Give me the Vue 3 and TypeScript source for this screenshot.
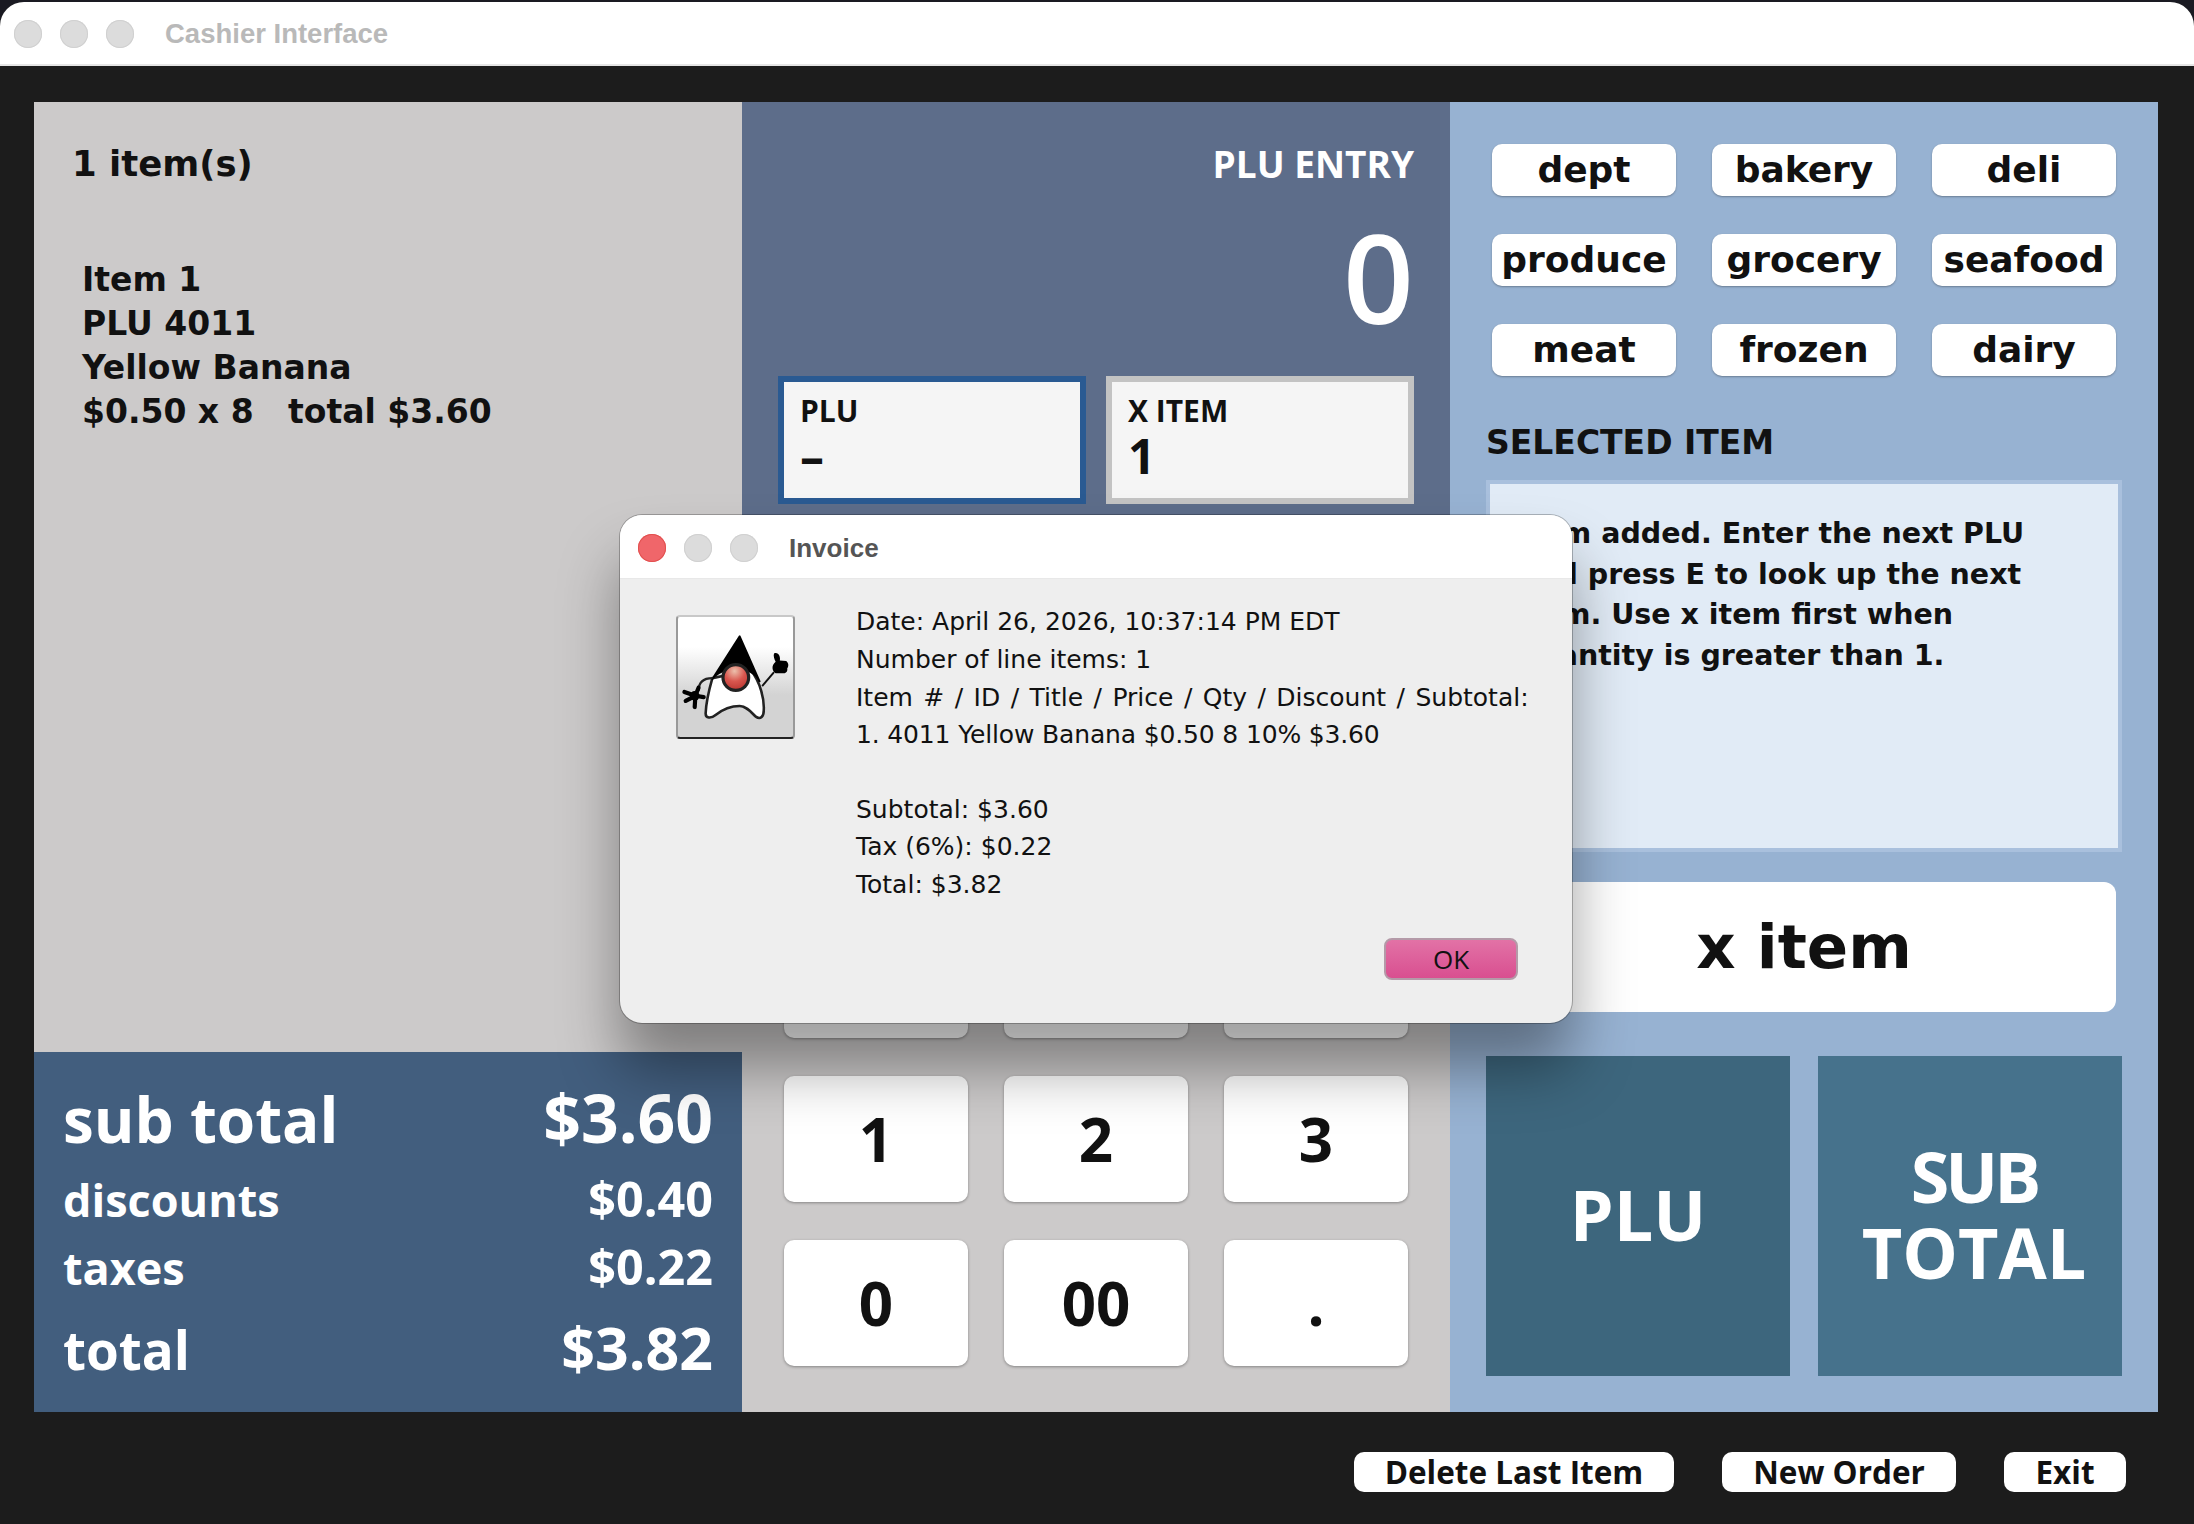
<template>
  <div class="screen">
    <div class="window">
      <header class="titlebar">
        <span class="dot"></span>
        <span class="dot"></span>
        <span class="dot"></span>
        <span class="window-title">Cashier Interface</span>
      </header>

      <main class="register">
        <section class="col col-left">
          <div class="receipt">
            <h2 class="count">1 item(s)</h2>
            <div class="lines">
              <div v-for="line in receiptLines" :key="line">{{ line }}</div>
            </div>
          </div>
          <div class="summary">
            <div v-for="row in summary" :key="row.label" class="sum-row" :class="row.size">
              <span class="sum-label">{{ row.label }}</span>
              <span class="sum-value">{{ row.value }}</span>
            </div>
          </div>
        </section>

        <section class="col col-mid">
          <div class="entry">
            <div class="entry-label">PLU ENTRY</div>
            <div class="entry-value">0</div>
            <div class="entry-boxes">
              <div class="entry-box active">
                <div class="box-label">PLU</div>
                <div class="box-value">–</div>
              </div>
              <div class="entry-box">
                <div class="box-label">X ITEM</div>
                <div class="box-value">1</div>
              </div>
            </div>
          </div>
          <div class="keypad">
            <button v-for="k in keys" :key="k" class="key">{{ k }}</button>
          </div>
        </section>

        <section class="col col-right">
          <div class="depts">
            <button v-for="d in departments" :key="d" class="dept">{{ d }}</button>
          </div>
          <h3 class="selected-title">SELECTED ITEM</h3>
          <div class="selected-box">
            Item added. Enter the next PLU<br />
            and press E to look up the next<br />
            item. Use x item first when<br />
            quantity is greater than 1.
          </div>
          <button class="x-item">x item</button>
          <div class="actions">
            <button class="action plu">PLU</button>
            <button class="action subtotal"><span class="sub-word">SUB</span><br />TOTAL</button>
          </div>
        </section>
      </main>

      <footer class="footer">
        <button class="foot-btn del">Delete Last Item</button>
        <button class="foot-btn order">New Order</button>
        <button class="foot-btn exit">Exit</button>
      </footer>
    </div>

    <div class="dialog">
      <div class="dialog-bar">
        <span class="dot red"></span>
        <span class="dot"></span>
        <span class="dot"></span>
        <span class="dialog-title">Invoice</span>
      </div>
      <div class="dialog-body">
        <div class="duke">
          <svg viewBox="198 345 358 373" width="100%" height="100%">
            <defs>
              <radialGradient id="noseFill" cx="0.45" cy="0.25" r="0.8">
                <stop offset="0" stop-color="#ecc0ac" />
                <stop offset="0.5" stop-color="#d9574f" />
                <stop offset="1" stop-color="#b8332e" />
              </radialGradient>
            </defs>
            <path d="M305 535C295 570 285 620 284 645C284 660 300 662 315 650C340 630 365 622 390 622C410 622 425 640 440 655C455 665 465 655 465 635C467 600 455 550 425 510Z" fill="#fff" stroke="#222" stroke-width="8" />
            <path d="M390 405L305 538C330 498 425 490 452 545Z" fill="#000" stroke="#000" stroke-width="6" stroke-linejoin="round" />
            <circle cx="378" cy="533" r="40" fill="url(#noseFill)" stroke="#222" stroke-width="10" />
            <path d="M460 560L497 516" stroke="#111" stroke-width="6" fill="none" />
            <path d="M497 458C510 452 518 468 515 480L535 482C544 490 542 500 538 505C540 512 536 518 530 520L502 520C490 512 488 495 502 484C498 475 494 465 497 458Z" fill="#000" />
            <path d="M305 535C280 535 262 545 262 575" stroke="#222" stroke-width="7" fill="none" />
            <circle cx="250" cy="590" r="15" fill="#000" />
            <path d="M252 590L218 578M252 590L222 606M252 592L250 625M252 590L278 594M252 590L262 565" stroke="#000" stroke-width="13" stroke-linecap="round" fill="none" />
          </svg>
        </div>
        <div class="invoice-text">
          <div>Date: April 26, 2026, 10:37:14 PM EDT</div>
          <div>Number of line items: 1</div>
          <div class="slashes">Item # / ID / Title / Price / Qty / Discount / Subtotal:</div>
          <div class="tight">1. 4011 Yellow Banana $0.50 8 10% $3.60</div>
          <div class="blank"></div>
          <div>Subtotal: $3.60</div>
          <div>Tax (6%): $0.22</div>
          <div>Total: $3.82</div>
        </div>
      </div>
      <div class="dialog-foot">
        <button class="ok">OK</button>
      </div>
    </div>
  </div>
</template>

<script setup lang="ts">
const receiptLines: string[] = ['Item 1', 'PLU 4011', 'Yellow Banana', '$0.50 x 8   total $3.60'];

const summary = [
  { label: 'sub total', value: '$3.60', size: 'big' },
  { label: 'discounts', value: '$0.40', size: 'small' },
  { label: 'taxes', value: '$0.22', size: 'small' },
  { label: 'total', value: '$3.82', size: 'large' },
];

const keys: string[] = ['7', '8', '9', '4', '5', '6', '1', '2', '3', '0', '00', '.'];

const departments: string[] = ['dept', 'bakery', 'deli', 'produce', 'grocery', 'seafood', 'meat', 'frozen', 'dairy'];
</script>

<style>
html,
body {
  margin: 0;
  background: #1a1a22;
}
</style>

<style scoped>
.screen {
  position: relative;
  width: 2194px;
  height: 1524px;
  overflow: hidden;
  font-family: "Open Sans", sans-serif;
  color: #111;
}

button {
  font-family: inherit;
  border: none;
  padding: 0;
  color: #111;
}

.window {
  margin-top: 2px;
  height: 1522px;
  background: #1c1c1c;
  border-radius: 24px 24px 0 0;
  overflow: hidden;
}

.titlebar {
  display: flex;
  align-items: center;
  gap: 18px;
  height: 60px;
  padding: 2px 0 0 14px;
  background: #fff;
  border-bottom: 2px solid #e6e6e6;
}

.dot {
  width: 28px;
  height: 28px;
  border-radius: 50%;
  background: #dcdcdc;
  box-shadow: inset 0 0 0 1px #d0d0d0;
}

.window-title {
  margin-left: 13px;
  font: bold 27.5px "Liberation Sans", sans-serif;
  color: #b9b9b9;
}

.register {
  display: grid;
  grid-template-columns: repeat(3, 708px);
  height: 1310px;
  margin: 36px 0 0 34px;
}

.col {
  display: flex;
  flex-direction: column;
}

.col-left {
  background: #cccaca;
}

.receipt {
  flex: 1;
  padding: 38px 38px;
}

.count {
  margin: 0;
  font: bold 35.5px/48px "DejaVu Sans", sans-serif;
}

.lines {
  margin: 70px 0 0 10px;
  font: bold 33px/44px "DejaVu Sans", sans-serif;
  white-space: pre;
}

.summary {
  height: 360px;
  box-sizing: border-box;
  padding: 20px 29px 0;
  background: #425e7e;
  color: #fff;
  font-weight: 700;
}

.sum-row {
  display: flex;
  justify-content: space-between;
  align-items: baseline;
}

.sum-row.big {
  line-height: 91px;
}

.sum-row.big .sum-label {
  font-size: 62px;
}

.sum-row.big .sum-value {
  font-size: 66px;
}

.sum-row.small {
  line-height: 66px;
}

.sum-row.small .sum-label {
  font-size: 45px;
}

.sum-row.small .sum-value {
  font-size: 48.5px;
}

.sum-row.large {
  line-height: 92px;
}

.sum-row.large .sum-label {
  font-size: 53px;
}

.sum-row.large .sum-value {
  font-size: 59px;
}

.entry {
  height: 414px;
  box-sizing: border-box;
  padding: 38px 36px 0;
  background: #5d6d8a;
  color: #fff;
  text-align: right;
  font-weight: 700;
}

.entry-label {
  font-size: 37px;
  line-height: 48px;
}

.entry-value {
  margin-top: 8px;
  font-size: 124px;
  line-height: 160px;
  font-weight: 600;
}

.entry-boxes {
  display: grid;
  grid-template-columns: 308px 308px;
  gap: 20px;
  margin-top: 20px;
}

.entry-box {
  height: 128px;
  box-sizing: border-box;
  padding: 9px 16px;
  border: 6px solid #c3c3c3;
  background: #f5f5f5;
  color: #111;
  text-align: left;
}

.entry-box.active {
  border-color: #2a5a92;
}

.box-label {
  font-size: 30px;
  line-height: 40px;
}

.box-value {
  font-size: 48px;
  line-height: 50px;
}

.keypad {
  flex: 1;
  display: grid;
  grid-template-columns: repeat(3, 184px);
  grid-auto-rows: 126px;
  gap: 38px 36px;
  align-content: end;
  padding: 0 42px 46px;
  background: #cccaca;
}

.key {
  background: #fff;
  border-radius: 10px;
  font-size: 60px;
  font-weight: 700;
  box-shadow: 0 1px 3px rgba(0, 0, 0, 0.35);
}

.col-right {
  padding: 42px 36px 0;
  background: #97b2d2;
}

.depts {
  display: grid;
  grid-template-columns: repeat(3, 184px);
  grid-auto-rows: 52px;
  gap: 38px 36px;
  margin-left: 6px;
}

.dept {
  background: #fff;
  border-radius: 10px;
  font: bold 36px/52px "DejaVu Sans", sans-serif;
  box-shadow: 0 1px 2px rgba(0, 0, 0, 0.3);
}

.selected-title {
  margin: 43px 0 0;
  font: bold 33px/48px "DejaVu Sans", sans-serif;
}

.selected-box {
  height: 372px;
  box-sizing: border-box;
  margin-top: 13px;
  padding: 30px 28px;
  border: 4px solid #a9c0dd;
  background: #e1ebf6;
  font: bold 28.5px/40.5px "DejaVu Sans", sans-serif;
  white-space: nowrap;
}

.x-item {
  align-self: flex-end;
  width: 624px;
  height: 130px;
  margin: 30px 6px 0 0;
  background: #fff;
  border-radius: 12px;
  font: bold 61px/130px "DejaVu Sans", sans-serif;
}

.actions {
  display: grid;
  grid-template-columns: 304px 304px;
  gap: 28px;
  margin-top: 44px;
}

.action {
  height: 320px;
  padding-bottom: 5px;
  color: #fff;
  font-size: 70px;
  line-height: 76px;
  font-weight: 700;
}

.action.plu {
  background: #3d667d;
}

.action.subtotal {
  padding-left: 8px;
  background: #46728c;
}

.sub-word {
  letter-spacing: -4px;
}

.footer {
  display: flex;
  align-items: flex-start;
  padding: 40px 0 0 1354px;
}

.foot-btn {
  height: 40px;
  background: #fff;
  border-radius: 10px;
  font-size: 31.5px;
  line-height: 38px;
  font-weight: 700;
}

.del {
  width: 320px;
}

.order {
  width: 234px;
  margin-left: 48px;
}

.exit {
  width: 122px;
  margin-left: 48px;
}

/* dialog floats over the register */
.dialog {
  position: absolute;
  left: 620px;
  top: 515px;
  width: 952px;
  height: 508px;
  display: flex;
  flex-direction: column;
  background: #eeeeee;
  border-radius: 22px;
  overflow: hidden;
  box-shadow: 0 45px 60px rgba(0, 0, 0, 0.38), 0 0 0 1px rgba(0, 0, 0, 0.25);
}

.dialog-bar {
  display: flex;
  align-items: center;
  gap: 18px;
  height: 60px;
  padding: 3px 0 0 18px;
  background: #fff;
  border-bottom: 1px solid #e8e8e8;
}

.dot.red {
  background: #f0666a;
  box-shadow: inset 0 0 0 1px #e2504f;
}

.dialog-title {
  margin-left: 13px;
  font: bold 26px "Liberation Sans", sans-serif;
  color: #555;
}

.dialog-body {
  flex: 1;
  display: flex;
  padding: 24px 0 0 56px;
}

.duke {
  width: 119px;
  height: 124px;
  box-sizing: border-box;
  margin-top: 12px;
  border: 2px solid #222;
  border-top-color: #c8c8c8;
  border-left-color: #999;
  border-right-color: #999;
  border-radius: 4px;
  background: linear-gradient(#fff 25%, #d3d3d3 65%);
}

.invoice-text {
  margin-left: 61px;
  font: 25px/37.8px "DejaVu Sans", sans-serif;
  color: #111;
}

.slashes {
  word-spacing: 2.5px;
}

.tight {
  letter-spacing: -0.15px;
}

.blank {
  height: 36.5px;
}

.dialog-foot {
  display: flex;
  justify-content: flex-end;
  height: 85px;
  padding-right: 54px;
  box-sizing: border-box;
}

.ok {
  width: 134px;
  height: 42px;
  border: 2px solid #b49aa8;
  border-radius: 8px;
  background: linear-gradient(#e272a6, #d94f90);
  font-size: 26px;
  color: #111;
}
</style>
